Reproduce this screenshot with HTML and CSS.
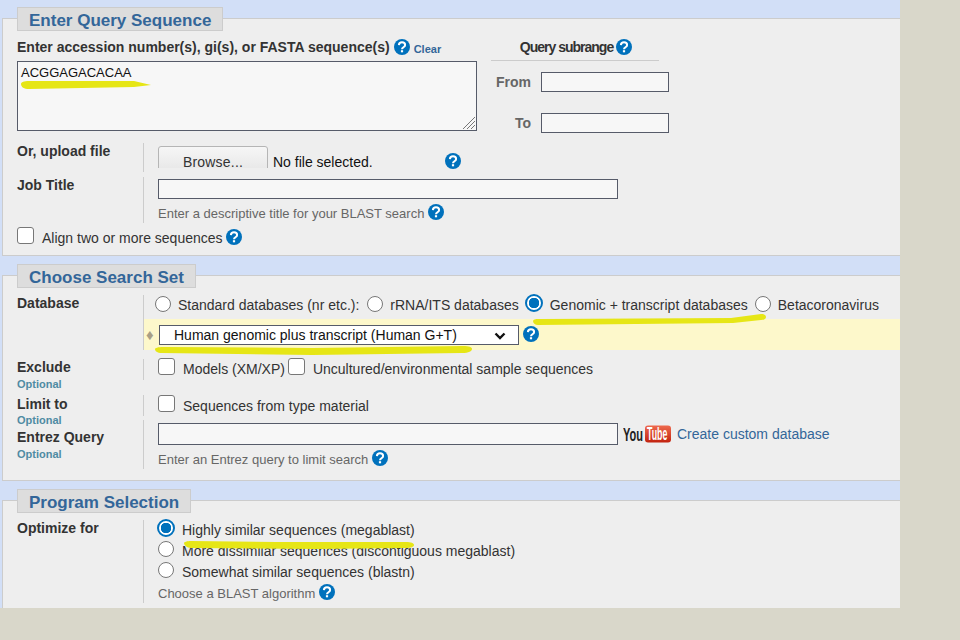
FILE: index.html
```html
<!DOCTYPE html>
<html lang="en">
<head>
<meta charset="utf-8">
<title>BLAST search</title>
<link rel="stylesheet" href="styles.css">
</head>
<body>
<svg class="defs" width="0" height="0" aria-hidden="true">
  <symbol id="help" viewBox="0 0 16 16">
    <circle cx="8" cy="8" r="8" fill="#0071bc"/>
    <path d="M4.9 6.1C5 4.3 6.3 3.3 8 3.3c1.800 0 3.100 1 3.100 2.600 0 2.300-3.100 2.300-3.100 4.300" fill="none" stroke="#fff" stroke-width="2"/>
    <rect x="6.900" y="11.200" width="2.200" height="2.100" fill="#fff"/>
  </symbol>
  <linearGradient id="yt-red" x1="0" y1="0" x2="0" y2="1">
    <stop offset="0" stop-color="#ee6a4e"/>
    <stop offset="1" stop-color="#c2230f"/>
  </linearGradient>
</svg>
<main class="page">
  <section class="panel panel-query">
    <h2 class="legend">Enter Query Sequence</h2>
    <div class="query-top">
      <div class="query-main">
        <div class="query-label">
          <label class="strong" for="seq">Enter accession number(s), gi(s), or FASTA sequence(s)</label>
          <svg class="help"><use href="#help"/></svg>
          <a class="clear" href="#">Clear</a>
        </div>
        <div class="seq-wrap">
          <textarea id="seq" class="seq">ACGGAGACACAA</textarea>
          <svg class="grip" viewBox="0 0 12 12" aria-hidden="true"><path d="M0 12 12 0M4 12l8-8M8 12l4-4" fill="none" stroke="#777" stroke-width="1"/></svg>
        </div>
      </div>
      <div class="subrange">
        <div class="subrange-head"><span class="subrange-title">Query subrange</span><svg class="help"><use href="#help"/></svg></div>
        <div class="range-row"><label class="range-label">From</label><input class="text range-input" type="text"></div>
        <div class="range-row range-to"><label class="range-label">To</label><input class="text range-input" type="text"></div>
      </div>
    </div>
    <div class="row row-upload">
      <div class="strong">Or, upload file</div>
      <div class="field field-upload">
        <div class="file-clip"><button class="browse" type="button">Browse...</button></div>
        <span class="file-name">No file selected.</span>
        <svg class="help help-file"><use href="#help"/></svg>
      </div>
    </div>
    <div class="row row-job">
      <div class="strong">Job Title</div>
      <div class="field field-input">
        <input class="text wide" type="text">
        <div class="hint">Enter a descriptive title for your BLAST search <svg class="help"><use href="#help"/></svg></div>
      </div>
    </div>
    <div class="align-row">
      <input class="check" type="checkbox">
      <span class="align-text">Align two or more sequences</span>
      <svg class="help"><use href="#help"/></svg>
    </div>
  </section>

  <section class="panel panel-search">
    <h2 class="legend">Choose Search Set</h2>
    <div class="row row-db">
      <div class="strong">Database</div>
      <div class="field field-db">
        <div class="db-radios">
          <input class="radio" type="radio" name="db"><span class="opt">Standard databases (nr etc.):</span>
          <input class="radio" type="radio" name="db"><span class="opt">rRNA/ITS databases</span>
          <input class="radio" type="radio" name="db" checked><span class="opt opt-tight">Genomic + transcript databases</span>
          <input class="radio" type="radio" name="db"><span class="opt">Betacoronavirus</span>
        </div>
        <div class="db-select">
          <span class="diamond">♦</span>
          <div class="select-wrap">
            <select class="select"><option>Human genomic plus transcript (Human G+T)</option></select>
            <svg class="chevron" viewBox="0 0 12 8"><path d="M1.500 1.500 6 6l4.500-4.500" fill="none" stroke="#111" stroke-width="2.400"/></svg>
          </div>
          <svg class="help"><use href="#help"/></svg>
        </div>
      </div>
    </div>
    <div class="row row-exclude">
      <div><div class="strong">Exclude</div><div class="optional">Optional</div></div>
      <div class="field field-checks">
        <input class="check" type="checkbox"><span class="opt">Models (XM/XP)</span>
        <input class="check" type="checkbox"><span class="opt">Uncultured/environmental sample sequences</span>
      </div>
    </div>
    <div class="row row-limit">
      <div class="label-limit"><div class="strong">Limit to</div><div class="optional optional-limit">Optional</div></div>
      <div class="field field-checks field-limit">
        <input class="check" type="checkbox"><span class="opt">Sequences from type material</span>
      </div>
    </div>
    <div class="row row-entrez">
      <div class="label-entrez"><div class="strong">Entrez Query</div><div class="optional">Optional</div></div>
      <div class="field field-entrez">
        <div class="entrez-line">
          <input class="text wide entrez-input" type="text">
          <svg class="youtube" viewBox="0 0 48 18" role="img" aria-label="YouTube">
            <text class="yt-you" transform="translate(0 15.500) scale(.58 1)">You</text>
            <rect x="22" y="0.500" width="26" height="17" rx="3" fill="url(#yt-red)"/>
            <text class="yt-tube" transform="translate(24 15) scale(.49 1)">Tube</text>
          </svg>
          <a class="custom" href="#">Create custom database</a>
        </div>
        <div class="hint hint-entrez">Enter an Entrez query to limit search <svg class="help"><use href="#help"/></svg></div>
      </div>
    </div>
  </section>

  <section class="panel panel-program">
    <h2 class="legend">Program Selection</h2>
    <div class="row row-program">
      <div class="strong">Optimize for</div>
      <div class="field field-program">
        <div class="prog-opt"><input class="radio" type="radio" name="prog" checked><span>Highly similar sequences (megablast)</span></div>
        <div class="prog-opt"><input class="radio" type="radio" name="prog"><span>More dissimilar sequences (discontiguous megablast)</span></div>
        <div class="prog-opt"><input class="radio" type="radio" name="prog"><span>Somewhat similar sequences (blastn)</span></div>
        <div class="hint hint-program">Choose a BLAST algorithm <svg class="help"><use href="#help"/></svg></div>
      </div>
    </div>
  </section>

  <svg class="marks" viewBox="0 0 900 608" aria-hidden="true">
    <path d="M21 84c0-2 3-3 8-3h105l17 4-17 2-105 2c-5 0-8-2-8-5z"/>
    <path d="M533 321c1-2 3-2 8-2l190-1 30-4c3 0 5 1 5 3s-2 3-5 3l-28 3-195 2c-3 0-5-2-5-4z"/>
    <path d="M155 349c0-1 3-2 8-2l150 1 150-2c6 0 9 1 9 3s-3 4-10 4l-150 2-150-2c-5 0-7-2-7-4z"/>
    <path d="M184 543c0-1 3-2 7-2l85 1 130 0c5 0 8 1 8 3s-3 3-8 3l-90 1-125-1c-4 0-7-3-7-5z"/>
  </svg>
</main>
</body>
</html>
```
FILE: styles.css
```css
* { box-sizing: border-box; }
html, body { margin: 0; padding: 0; }
body {
  height: 640px;
  overflow: hidden;
  background: #d9d7ca;
  color: #333;
  font-family: "Liberation Sans", Arial, sans-serif;
  font-size: 14px;
  line-height: 16px;
}
.defs { position: absolute; }
.page {
  position: relative;
  width: 900px;
  height: 608px;
  padding: 18px 0 0 2px;
  overflow: hidden;
  background: #d2dff7;
}
.panel {
  width: 920px;
  padding: 0 0 0 14px;
  margin-bottom: 19px;
  background: #eee;
  border: 1px solid #ccc;
}
.legend {
  width: fit-content;
  height: 24px;
  margin: -12px 0 0;
  padding: 2px 11px 0;
  background: #ddd;
  border: 1px solid #ccc;
  color: #369;
  font-size: 17px;
  font-weight: bold;
  line-height: 22px;
}
.strong { font-weight: bold; }
.help {
  display: inline-block;
  flex: none;
  width: 16px;
  height: 16px;
  vertical-align: -2px;
}

/* query block */
.panel-query { height: 238px; }
.query-top { display: flex; padding-top: 8px; }
.query-main { width: 460px; }
.query-label { display: flex; align-items: center; gap: 4px; height: 16px; margin-bottom: 6px; }
.clear { color: #369; font-size: 11px; font-weight: bold; text-decoration: none; padding-top: 3px; }
.seq-wrap { position: relative; width: 460px; height: 70px; }
.seq {
  display: block;
  width: 460px;
  height: 70px;
  padding: 3px;
  background: #f7f7f7;
  border: 1px solid #565b69;
  border-radius: 0;
  color: #111;
  font-family: "Liberation Sans", Arial, sans-serif;
  font-size: 13px;
  line-height: 16px;
  outline: none;
  resize: none;
}
.grip { position: absolute; right: 2px; bottom: 2px; width: 12px; height: 12px; }
.subrange { width: 178px; margin-left: 14px; }
.subrange-head {
  display: flex;
  justify-content: center;
  align-items: center;
  gap: 3px;
  width: 168px;
  height: 22px;
  padding: 0 0 6px 2px;
  border-bottom: 1px solid #ccc;
}
.subrange-title { font-weight: bold; letter-spacing: -1px; }
.range-row { display: flex; align-items: center; margin-top: 11px; }
.range-to { margin-top: 21px; }
.range-label { width: 40px; color: #666; font-weight: bold; text-align: right; }
.text {
  display: block;
  height: 20px;
  padding: 1px 4px;
  background: #f7f7f7;
  border: 1px solid #565b69;
  border-radius: 0;
  outline: none;
}
.range-input { width: 128px; margin-left: 10px; }
.wide { width: 460px; }

/* rows */
.row { display: grid; grid-template-columns: 126px 1fr; }
.field { padding-left: 14px; border-left: 1px solid #ccc; }
.row-upload { height: 29px; margin-top: 10px; }
.field-upload { display: flex; padding-top: 3px; }
.file-clip { width: 110px; height: 22px; overflow: hidden; }
.browse {
  display: block;
  width: 110px;
  height: 32px;
  padding: 0;
  background: linear-gradient(#f6f6f6, #e3e3e3);
  border: 1px solid #b5b5b5;
  border-radius: 3px;
  color: #333;
  font-family: "Liberation Sans", Arial, sans-serif;
  font-size: 14px;
  letter-spacing: .2px;
}
.file-name { margin-left: 5px; padding-top: 8px; color: #111; }
.help-file { margin: 7px 0 0 72px; }
.row-job { height: 45px; margin-top: 5px; }
.field-input { padding-top: 2px; }
.hint { color: #666; font-size: 13px; line-height: 18px; margin-top: 5px; }
.align-row { display: flex; align-items: flex-start; margin-top: 5px; }
.align-text { margin-left: 8px; padding-top: 3px; }
.align-row .help { margin: 2px 0 0 3px; }
.check {
  appearance: none;
  flex: none;
  width: 17px;
  height: 17px;
  margin: 0;
  background: #fff;
  border: 1px solid #777;
  border-radius: 3px;
}
.radio {
  appearance: none;
  flex: none;
  width: 16px;
  height: 16px;
  margin: 0;
  background: #fff;
  border: 1px solid #777;
  border-radius: 50%;
}
.radio:checked {
  width: 18px;
  height: 18px;
  margin: -2px 0 0 -2px;
  background: radial-gradient(circle, #0071bc 0 5px, #fff 5.500px);
  border: 2px solid #0071bc;
}

/* search set */
.panel-search { height: 206px; }
.row-db { height: 55px; margin-top: 7px; }
.field-db { padding-left: 0; }
.db-radios { display: flex; align-items: center; height: 24px; padding: 0 0 6px 11px; }
.opt { margin: 2px 8px 0 7px; white-space: nowrap; }
.opt-tight { margin-right: 7px; }
.db-select {
  display: flex;
  align-items: flex-start;
  width: 760px;
  height: 31px;
  padding-top: 6px;
  background: #fdf8cb;
}
.diamond { width: 15px; padding-left: 2px; color: #a89f86; font-size: 15px; line-height: 20px; }
.select-wrap { position: relative; width: 360px; height: 20px; }
.select {
  display: block;
  appearance: none;
  width: 360px;
  height: 20px;
  padding: 0 0 0 14px;
  background: #fff;
  border: 1px solid #565b69;
  border-radius: 0;
  color: #111;
  font-family: "Liberation Sans", Arial, sans-serif;
  font-size: 14px;
}
.chevron { position: absolute; top: 7px; left: 335px; width: 12px; height: 8px; }
.db-select .help { margin: 1px 0 0 4px; }
.optional { margin-top: 3px; color: #4f8ba3; font-size: 11px; font-weight: bold; line-height: 13px; }
.row-exclude { height: 36px; margin-top: 9px; }
.field-checks { display: flex; align-items: flex-start; height: 21px; }
.field-checks .check { margin-top: -1px; }
.field-checks .opt { margin: 2px 3px 0 8px; }
.row-limit { height: 25px; }
.label-limit { padding-top: 1px; }
.optional-limit { margin-top: 2px; }
.field-limit .check { margin-top: 0; }
.field-limit .opt { margin-top: 3px; }
.row-entrez { height: 48px; }
.label-entrez { padding-top: 9px; }
.field-entrez { padding-top: 3px; }
.entrez-line { display: flex; align-items: center; height: 22px; }
.entrez-input { height: 22px; }
.youtube { width: 48px; height: 18px; margin-left: 5px; }
.yt-you { fill: #222; font: bold 19px "Liberation Sans", Arial, sans-serif; }
.yt-tube { fill: #fff; font: bold 18px "Liberation Sans", Arial, sans-serif; }
.custom { margin-left: 6px; color: #369; text-decoration: none; }
.hint-entrez { margin-top: 5px; }

/* program */
.panel-program { height: 130px; }
.row-program { height: 82px; margin-top: 7px; }
.prog-opt { display: flex; align-items: center; gap: 8px; height: 19px; margin-bottom: 2px; }
.prog-opt .radio { margin-bottom: 3px; }
.prog-opt .radio:checked { margin: -1px -1px 2px; }
.hint-program { margin-top: 3px; }

/* hand-drawn highlighter marks */
.marks { position: absolute; top: 0; left: 0; width: 900px; height: 608px; pointer-events: none; }
.marks path { fill: #e6e616; }
```
